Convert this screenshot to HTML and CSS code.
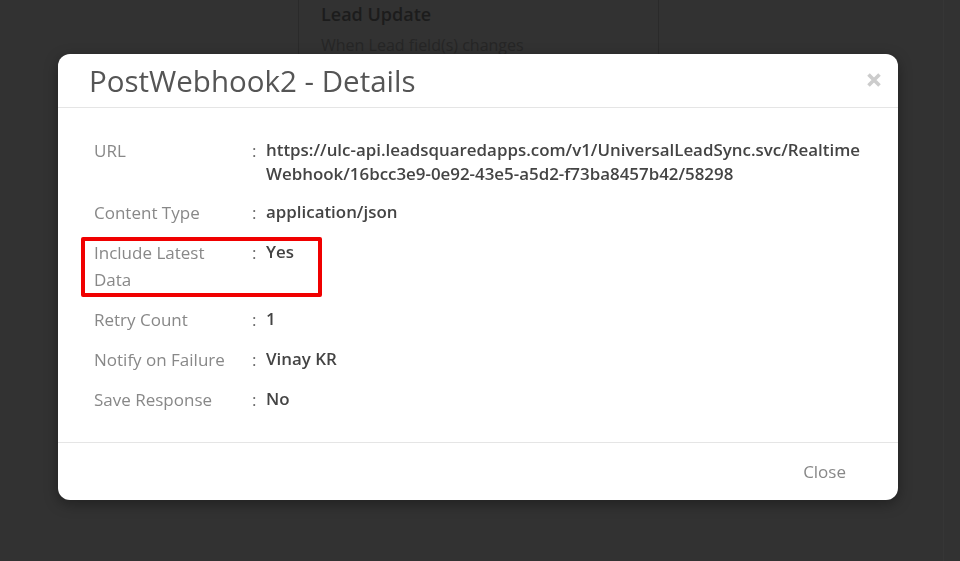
FILE: index.html
```html
<!DOCTYPE html>
<html>
<head>
<meta charset="utf-8">
<link rel="stylesheet" href="styles.css">
</head>
<body>
<div class="page">
  <div class="bg-card">
    <div class="bg-title">Lead Update</div>
    <div class="bg-sub">When Lead field(s) changes</div>
  </div>
</div>
<div class="overlay">
  <div class="modal">
    <div class="modal-header">
      <h2 class="modal-title">PostWebhook2 - Details</h2>
      <svg class="close-x" width="16" height="16" viewBox="0 0 16 16" aria-label="close">
        <path d="M2.5 2.5 L13.5 13.5 M13.5 2.5 L2.5 13.5" stroke="#cccccc" stroke-width="3.6" stroke-linecap="butt" fill="none"/>
      </svg>
    </div>
    <div class="modal-body">
      <div class="row">
        <div class="label">URL</div>
        <div class="colon">:</div>
        <div class="value">https://ulc-api.leadsquaredapps.com/v1/UniversalLeadSync.svc/Realtime<br>Webhook/16bcc3e9-0e92-43e5-a5d2-f73ba8457b42/58298</div>
      </div>
      <div class="row">
        <div class="label">Content Type</div>
        <div class="colon">:</div>
        <div class="value">application/json</div>
      </div>
      <div class="row highlight-row">
        <div class="label">Include Latest<br>Data</div>
        <div class="colon">:</div>
        <div class="value">Yes</div>
        <div class="highlight"></div>
      </div>
      <div class="row">
        <div class="label">Retry Count</div>
        <div class="colon">:</div>
        <div class="value">1</div>
      </div>
      <div class="row">
        <div class="label">Notify on Failure</div>
        <div class="colon">:</div>
        <div class="value">Vinay KR</div>
      </div>
      <div class="row">
        <div class="label">Save Response</div>
        <div class="colon">:</div>
        <div class="value">No</div>
      </div>
    </div>
    <div class="modal-footer">
      <span class="close-btn">Close</span>
    </div>
  </div>
</div>
</body>
</html>
```

FILE: styles.css
```css
html, body {
  margin: 0;
  padding: 0;
  height: 100%;
}
body {
  background: #323232;
  font-family: "Open Sans", "Noto Sans", sans-serif;
  overflow: hidden;
}
.page {
  height: 100%;
  border-right: 1px solid #363636;
  width: 944px;
  box-sizing: border-box;
}
.bg-card {
  margin-left: 298px;
  width: 361px;
  height: 120px;
  box-sizing: border-box;
  border-left: 1px solid #2a2a2a;
  border-right: 1px solid #2a2a2a;
  padding: 1px 0 0 22px;
}
.bg-title {
  font-size: 18px;
  font-weight: 600;
  color: #1c1c1c;
  line-height: 26px;
}
.bg-sub {
  font-size: 16px;
  color: #262626;
  margin-top: 7px;
  line-height: 22px;
}
.overlay {
  position: fixed;
  inset: 0;
}
.modal {
  position: absolute;
  left: 58px;
  top: 54px;
  width: 840px;
  height: 446px;
  background: #fff;
  border-radius: 12px;
  box-shadow: 0 4px 14px rgba(0,0,0,0.35);
  display: flex;
  flex-direction: column;
}
.modal-header {
  height: 53px;
  border-bottom: 1px solid #e5e5e5;
  display: flex;
  align-items: center;
  justify-content: space-between;
  padding: 0 16px 0 31px;
}
.modal-title {
  margin: 0;
  font-size: 29.5px;
  font-weight: 400;
  color: #555;
  line-height: 38px;
}
.close-x {
  display: block;
  margin-top: -1px;
}
.modal-body {
  flex: 1;
  padding: 29px 20px 0 36px;
}
.row {
  display: flex;
  margin-bottom: 13px;
  position: relative;
}
.label {
  width: 158px;
  font-size: 17px;
  line-height: 27px;
  color: #888;
}
.colon {
  width: 14px;
  font-size: 17px;
  line-height: 27px;
  color: #666;
}
.value {
  flex: 1;
  font-size: 16.9px;
  line-height: 24px;
  padding-top: 1px;
  font-weight: 600;
  color: #444;
  white-space: nowrap;
}
.highlight {
  position: absolute;
  left: -13px;
  top: -2px;
  width: 241px;
  height: 60px;
  box-sizing: border-box;
  border: 4px solid #f00000;
  border-radius: 2px;
}
.modal-footer {
  height: 57px;
  border-top: 1px solid #e5e5e5;
  display: flex;
  align-items: center;
  justify-content: flex-end;
  padding-right: 52px;
}
.close-btn {
  font-size: 17px;
  color: #888;
}
```
